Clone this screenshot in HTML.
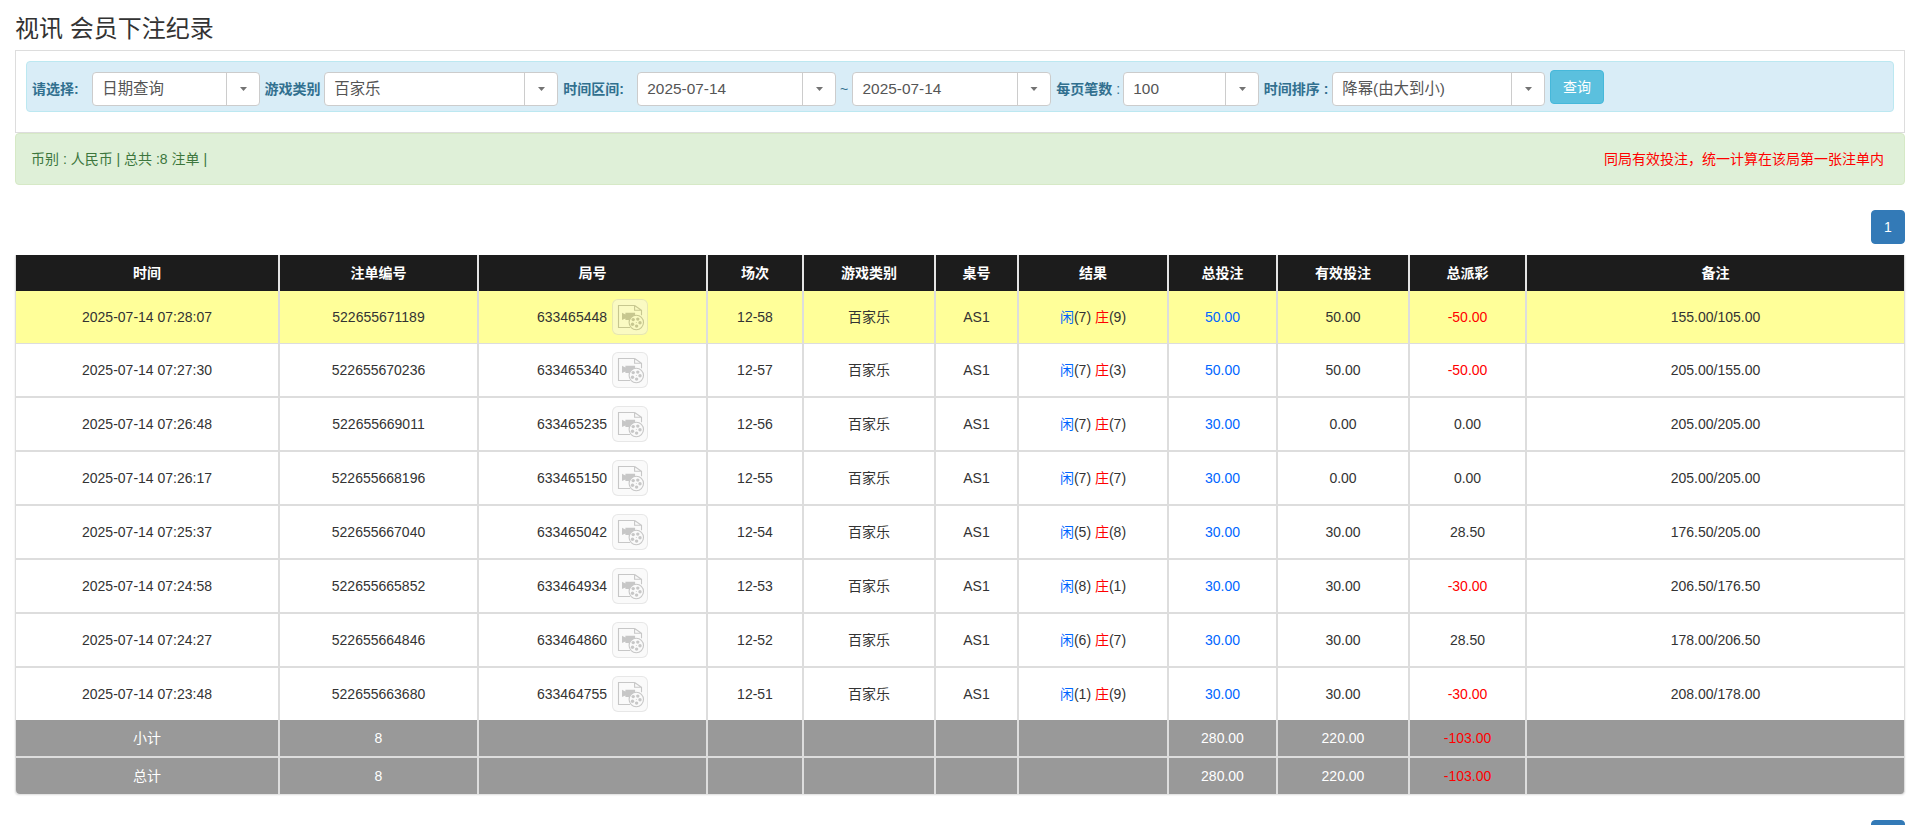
<!DOCTYPE html>
<html lang="zh-CN"><head><meta charset="utf-8"><title>视讯 会员下注纪录</title>
<style>
*{box-sizing:border-box}
html,body{margin:0;padding:0;background:#fff}
body{width:1920px;height:825px;overflow:hidden;position:relative;font-family:"Liberation Sans","Noto Sans CJK SC",sans-serif;font-size:14px;line-height:20px;color:#333}
h3{position:absolute;left:15px;top:15px;margin:0;font-size:24px;line-height:28px;font-weight:normal;color:#333;white-space:nowrap}
.panel{position:absolute;left:15px;top:50px;width:1890px;height:83px;border:1px solid #ddd;background:#fff}
.info{position:absolute;left:10px;top:10px;width:1868px;height:51px;background:#d9edf7;border:1px solid #bce8f1;border-radius:4px;color:#31708f}
.lbl{position:absolute;top:17px;line-height:20px;font-weight:bold;white-space:nowrap;color:#31708f}
.dd{position:absolute;top:10px;height:34px;background:#fff;border:1px solid #ccc;border-radius:4px;color:#555;font-size:15.4px;white-space:nowrap}
.ddt{position:absolute;left:9.3px;top:0;line-height:32px}
.dda{position:absolute;right:0;top:0;width:33px;height:32px;border-left:1px solid #ccc}
.dda i{position:absolute;left:12.8px;top:13.8px;width:7.4px;height:4.3px;background:#737373;clip-path:polygon(0 0,100% 0,50% 100%)}
.qbtn{position:absolute;left:1523px;top:8px;width:54px;height:34px;background:#5bc0de;border:1px solid #46b8da;border-radius:4px;color:#fff;text-align:center;line-height:32px}
.succ{position:absolute;left:15px;top:133px;width:1890px;height:52px;background:#dff0d8;border:1px solid #d6e9c6;border-radius:4px;color:#3c763d;padding:15px;line-height:20px}
.succ .r{position:absolute;right:20px;top:15px;color:#f00}
.pg{position:absolute;left:1871px;width:34px;height:34px;background:#337ab7;border:1px solid #337ab7;border-radius:4px;color:#fff;text-align:center;line-height:32px}
table{position:absolute;left:15px;top:255px;width:1890px;border-collapse:separate;border-spacing:0;table-layout:fixed;border-left:1px solid #ddd;box-shadow:0 1px 2px rgba(0,0,0,.14);border-radius:0 0 4px 4px}
th,td{text-align:center;vertical-align:middle;padding:0;border-right:2px solid #ddd;border-bottom:2px solid #ddd;white-space:nowrap;overflow:hidden}
th:last-child,td:last-child{border-right:1px solid #ddd}
thead th{height:36px;background:#1c1c1c;color:#fff;font-weight:bold;border-bottom:0;border-right-color:#e4e4e4}
tbody td{height:54px}
tbody tr.y td{background:#ff9;height:53px;border-bottom:1px solid #ddd}
tbody tr:last-child td{height:52px;border-bottom:0}
tfoot td{background:#999;color:#fff;height:38px}
tfoot tr:first-child td{height:38px}
tfoot tr:last-child td{height:36px;border-bottom:0}
tfoot tr:last-child td:first-child{border-bottom-left-radius:4px}
tfoot tr:last-child td:last-child{border-bottom-right-radius:4px}
.b{color:#06f}.r{color:#f00}
.vbtn{display:inline-block;vertical-align:middle;width:36px;height:36px;margin-left:5px;border-radius:6px;background:#f4f4f4;box-shadow:inset 0 0 0 1px #ccc;opacity:.45;overflow:hidden}
.ju{position:relative;top:1px}
.vbtn svg{display:block}
</style></head><body>
<h3>视讯 会员下注纪录</h3>
<div class="panel"><div class="info"><span class="lbl" style="left:5px">请选择:</span><div class="dd" style="left:65px;width:168px"><span class="ddt">日期查询</span><span class="dda"><i></i></span></div><span class="lbl" style="left:237.5px">游戏类别</span><div class="dd" style="left:297px;width:234px"><span class="ddt">百家乐</span><span class="dda"><i></i></span></div><span class="lbl" style="left:536.25px">时间区间:</span><div class="dd" style="left:610px;width:199px"><span class="ddt">2025-07-14</span><span class="dda"><i></i></span></div><span class="lbl" style="left:813px;font-weight:normal">~</span><div class="dd" style="left:825.25px;width:198.25px"><span class="ddt">2025-07-14</span><span class="dda"><i></i></span></div><span class="lbl" style="left:1029.25px">每页笔数 <span style="font-weight:normal">:</span></span><div class="dd" style="left:1096px;width:136px"><span class="ddt">100</span><span class="dda"><i></i></span></div><span class="lbl" style="left:1236.75px">时间排序 :</span><div class="dd" style="left:1305px;width:213px"><span class="ddt">降幂(由大到小)</span><span class="dda"><i></i></span></div><span class="qbtn">查询</span></div></div>
<div class="succ">币别 : 人民币 | 总共 :8 注单 |<span class="r">同局有效投注，统一计算在该局第一张注单内</span></div>
<div class="pg" style="top:210px">1</div>
<table><colgroup><col style="width:264px"><col style="width:199px"><col style="width:229px"><col style="width:96px"><col style="width:132px"><col style="width:83px"><col style="width:150px"><col style="width:109px"><col style="width:132px"><col style="width:117px"><col style="width:378px"></colgroup>
<thead><tr><th>时间</th><th>注单编号</th><th>局号</th><th>场次</th><th>游戏类别</th><th>桌号</th><th>结果</th><th>总投注</th><th>有效投注</th><th>总派彩</th><th>备注</th></tr></thead>
<tbody>
<tr class="y"><td>2025-07-14 07:28:07</td><td>522655671189</td><td><span class="ju">633465448</span><span class="vbtn"><svg width="36" height="36" viewBox="0 0 36 36"><path d="M22.6 6.5H6.5v22H18M22.6 6.5l6.9 4.8v5M22.6 6.5v4.8h6.9" fill="none" stroke="#858585" stroke-width="1.1"/><path d="M10 13.8l3.4 1.6v-1.6h9.7v7.2h-9.7v-1.6l-3.4 1.6z" fill="#858585"/><circle cx="24.3" cy="23.5" r="7.2" fill="#f4f4f4" stroke="#858585" stroke-width="1.1"/><circle cx="25.8" cy="20.1" r="1.7" fill="#858585"/><circle cx="28" cy="23.7" r="1.7" fill="#858585"/><circle cx="24.6" cy="27.1" r="1.7" fill="#858585"/><circle cx="20.5" cy="25.2" r="1.7" fill="#858585"/><circle cx="21.2" cy="20.6" r="1.7" fill="#858585"/><circle cx="24.3" cy="23.5" r="0.5" fill="#858585"/></svg></span></td><td>12-58</td><td>百家乐</td><td>AS1</td><td><span class="b">闲</span>(7) <span class="r">庄</span>(9)</td><td class="b">50.00</td><td>50.00</td><td class="r">-50.00</td><td>155.00/105.00</td></tr>
<tr><td>2025-07-14 07:27:30</td><td>522655670236</td><td><span class="ju">633465340</span><span class="vbtn"><svg width="36" height="36" viewBox="0 0 36 36"><path d="M22.6 6.5H6.5v22H18M22.6 6.5l6.9 4.8v5M22.6 6.5v4.8h6.9" fill="none" stroke="#858585" stroke-width="1.1"/><path d="M10 13.8l3.4 1.6v-1.6h9.7v7.2h-9.7v-1.6l-3.4 1.6z" fill="#858585"/><circle cx="24.3" cy="23.5" r="7.2" fill="#f4f4f4" stroke="#858585" stroke-width="1.1"/><circle cx="25.8" cy="20.1" r="1.7" fill="#858585"/><circle cx="28" cy="23.7" r="1.7" fill="#858585"/><circle cx="24.6" cy="27.1" r="1.7" fill="#858585"/><circle cx="20.5" cy="25.2" r="1.7" fill="#858585"/><circle cx="21.2" cy="20.6" r="1.7" fill="#858585"/><circle cx="24.3" cy="23.5" r="0.5" fill="#858585"/></svg></span></td><td>12-57</td><td>百家乐</td><td>AS1</td><td><span class="b">闲</span>(7) <span class="r">庄</span>(3)</td><td class="b">50.00</td><td>50.00</td><td class="r">-50.00</td><td>205.00/155.00</td></tr>
<tr><td>2025-07-14 07:26:48</td><td>522655669011</td><td><span class="ju">633465235</span><span class="vbtn"><svg width="36" height="36" viewBox="0 0 36 36"><path d="M22.6 6.5H6.5v22H18M22.6 6.5l6.9 4.8v5M22.6 6.5v4.8h6.9" fill="none" stroke="#858585" stroke-width="1.1"/><path d="M10 13.8l3.4 1.6v-1.6h9.7v7.2h-9.7v-1.6l-3.4 1.6z" fill="#858585"/><circle cx="24.3" cy="23.5" r="7.2" fill="#f4f4f4" stroke="#858585" stroke-width="1.1"/><circle cx="25.8" cy="20.1" r="1.7" fill="#858585"/><circle cx="28" cy="23.7" r="1.7" fill="#858585"/><circle cx="24.6" cy="27.1" r="1.7" fill="#858585"/><circle cx="20.5" cy="25.2" r="1.7" fill="#858585"/><circle cx="21.2" cy="20.6" r="1.7" fill="#858585"/><circle cx="24.3" cy="23.5" r="0.5" fill="#858585"/></svg></span></td><td>12-56</td><td>百家乐</td><td>AS1</td><td><span class="b">闲</span>(7) <span class="r">庄</span>(7)</td><td class="b">30.00</td><td>0.00</td><td>0.00</td><td>205.00/205.00</td></tr>
<tr><td>2025-07-14 07:26:17</td><td>522655668196</td><td><span class="ju">633465150</span><span class="vbtn"><svg width="36" height="36" viewBox="0 0 36 36"><path d="M22.6 6.5H6.5v22H18M22.6 6.5l6.9 4.8v5M22.6 6.5v4.8h6.9" fill="none" stroke="#858585" stroke-width="1.1"/><path d="M10 13.8l3.4 1.6v-1.6h9.7v7.2h-9.7v-1.6l-3.4 1.6z" fill="#858585"/><circle cx="24.3" cy="23.5" r="7.2" fill="#f4f4f4" stroke="#858585" stroke-width="1.1"/><circle cx="25.8" cy="20.1" r="1.7" fill="#858585"/><circle cx="28" cy="23.7" r="1.7" fill="#858585"/><circle cx="24.6" cy="27.1" r="1.7" fill="#858585"/><circle cx="20.5" cy="25.2" r="1.7" fill="#858585"/><circle cx="21.2" cy="20.6" r="1.7" fill="#858585"/><circle cx="24.3" cy="23.5" r="0.5" fill="#858585"/></svg></span></td><td>12-55</td><td>百家乐</td><td>AS1</td><td><span class="b">闲</span>(7) <span class="r">庄</span>(7)</td><td class="b">30.00</td><td>0.00</td><td>0.00</td><td>205.00/205.00</td></tr>
<tr><td>2025-07-14 07:25:37</td><td>522655667040</td><td><span class="ju">633465042</span><span class="vbtn"><svg width="36" height="36" viewBox="0 0 36 36"><path d="M22.6 6.5H6.5v22H18M22.6 6.5l6.9 4.8v5M22.6 6.5v4.8h6.9" fill="none" stroke="#858585" stroke-width="1.1"/><path d="M10 13.8l3.4 1.6v-1.6h9.7v7.2h-9.7v-1.6l-3.4 1.6z" fill="#858585"/><circle cx="24.3" cy="23.5" r="7.2" fill="#f4f4f4" stroke="#858585" stroke-width="1.1"/><circle cx="25.8" cy="20.1" r="1.7" fill="#858585"/><circle cx="28" cy="23.7" r="1.7" fill="#858585"/><circle cx="24.6" cy="27.1" r="1.7" fill="#858585"/><circle cx="20.5" cy="25.2" r="1.7" fill="#858585"/><circle cx="21.2" cy="20.6" r="1.7" fill="#858585"/><circle cx="24.3" cy="23.5" r="0.5" fill="#858585"/></svg></span></td><td>12-54</td><td>百家乐</td><td>AS1</td><td><span class="b">闲</span>(5) <span class="r">庄</span>(8)</td><td class="b">30.00</td><td>30.00</td><td>28.50</td><td>176.50/205.00</td></tr>
<tr><td>2025-07-14 07:24:58</td><td>522655665852</td><td><span class="ju">633464934</span><span class="vbtn"><svg width="36" height="36" viewBox="0 0 36 36"><path d="M22.6 6.5H6.5v22H18M22.6 6.5l6.9 4.8v5M22.6 6.5v4.8h6.9" fill="none" stroke="#858585" stroke-width="1.1"/><path d="M10 13.8l3.4 1.6v-1.6h9.7v7.2h-9.7v-1.6l-3.4 1.6z" fill="#858585"/><circle cx="24.3" cy="23.5" r="7.2" fill="#f4f4f4" stroke="#858585" stroke-width="1.1"/><circle cx="25.8" cy="20.1" r="1.7" fill="#858585"/><circle cx="28" cy="23.7" r="1.7" fill="#858585"/><circle cx="24.6" cy="27.1" r="1.7" fill="#858585"/><circle cx="20.5" cy="25.2" r="1.7" fill="#858585"/><circle cx="21.2" cy="20.6" r="1.7" fill="#858585"/><circle cx="24.3" cy="23.5" r="0.5" fill="#858585"/></svg></span></td><td>12-53</td><td>百家乐</td><td>AS1</td><td><span class="b">闲</span>(8) <span class="r">庄</span>(1)</td><td class="b">30.00</td><td>30.00</td><td class="r">-30.00</td><td>206.50/176.50</td></tr>
<tr><td>2025-07-14 07:24:27</td><td>522655664846</td><td><span class="ju">633464860</span><span class="vbtn"><svg width="36" height="36" viewBox="0 0 36 36"><path d="M22.6 6.5H6.5v22H18M22.6 6.5l6.9 4.8v5M22.6 6.5v4.8h6.9" fill="none" stroke="#858585" stroke-width="1.1"/><path d="M10 13.8l3.4 1.6v-1.6h9.7v7.2h-9.7v-1.6l-3.4 1.6z" fill="#858585"/><circle cx="24.3" cy="23.5" r="7.2" fill="#f4f4f4" stroke="#858585" stroke-width="1.1"/><circle cx="25.8" cy="20.1" r="1.7" fill="#858585"/><circle cx="28" cy="23.7" r="1.7" fill="#858585"/><circle cx="24.6" cy="27.1" r="1.7" fill="#858585"/><circle cx="20.5" cy="25.2" r="1.7" fill="#858585"/><circle cx="21.2" cy="20.6" r="1.7" fill="#858585"/><circle cx="24.3" cy="23.5" r="0.5" fill="#858585"/></svg></span></td><td>12-52</td><td>百家乐</td><td>AS1</td><td><span class="b">闲</span>(6) <span class="r">庄</span>(7)</td><td class="b">30.00</td><td>30.00</td><td>28.50</td><td>178.00/206.50</td></tr>
<tr><td>2025-07-14 07:23:48</td><td>522655663680</td><td><span class="ju">633464755</span><span class="vbtn"><svg width="36" height="36" viewBox="0 0 36 36"><path d="M22.6 6.5H6.5v22H18M22.6 6.5l6.9 4.8v5M22.6 6.5v4.8h6.9" fill="none" stroke="#858585" stroke-width="1.1"/><path d="M10 13.8l3.4 1.6v-1.6h9.7v7.2h-9.7v-1.6l-3.4 1.6z" fill="#858585"/><circle cx="24.3" cy="23.5" r="7.2" fill="#f4f4f4" stroke="#858585" stroke-width="1.1"/><circle cx="25.8" cy="20.1" r="1.7" fill="#858585"/><circle cx="28" cy="23.7" r="1.7" fill="#858585"/><circle cx="24.6" cy="27.1" r="1.7" fill="#858585"/><circle cx="20.5" cy="25.2" r="1.7" fill="#858585"/><circle cx="21.2" cy="20.6" r="1.7" fill="#858585"/><circle cx="24.3" cy="23.5" r="0.5" fill="#858585"/></svg></span></td><td>12-51</td><td>百家乐</td><td>AS1</td><td><span class="b">闲</span>(1) <span class="r">庄</span>(9)</td><td class="b">30.00</td><td>30.00</td><td class="r">-30.00</td><td>208.00/178.00</td></tr>
</tbody>
<tfoot>
<tr><td>小计</td><td>8</td><td></td><td></td><td></td><td></td><td></td><td>280.00</td><td>220.00</td><td class="r">-103.00</td><td></td></tr>
<tr><td>总计</td><td>8</td><td></td><td></td><td></td><td></td><td></td><td>280.00</td><td>220.00</td><td class="r">-103.00</td><td></td></tr>
</tfoot></table>
<div class="pg" style="top:820px">1</div>
</body></html>
